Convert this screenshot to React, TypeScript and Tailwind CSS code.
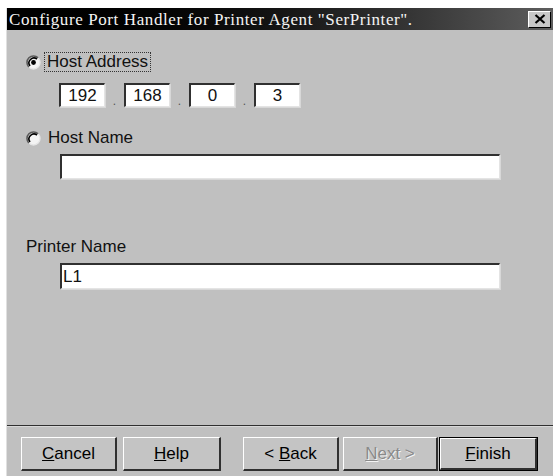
import React from "react";

const Radio = ({ checked }: { checked?: boolean }) => (
  <svg width="15" height="15" viewBox="0 0 15 15" className="shrink-0">
    <circle cx="7.5" cy="7.5" r="6.5" fill="#f4f4f4" />
    <path d="M12.1 2.9 A6.5 6.5 0 0 0 2.9 12.1" fill="none" stroke="#5a5a5a" strokeWidth="1.6" />
    <path d="M11 4 A5 5 0 0 0 4 11" fill="none" stroke="#000" strokeWidth="1.6" />
    <path d="M2.9 12.1 A6.5 6.5 0 0 0 12.1 2.9" fill="none" stroke="#e6e6e6" strokeWidth="1.4" />
    {checked && <circle cx="7.5" cy="7.5" r="2.4" fill="#000" />}
  </svg>
);

const Sunken = ({ className, children }: { className?: string; children?: React.ReactNode }) => (
  <div
    className={`bg-white border-t-2 border-l-2 border-b border-r border-t-[#303030] border-l-[#303030] border-b-[#e4e4e4] border-r-[#e4e4e4] shadow-[1px_1px_0_#d8d8d8] flex items-center ${className ?? ""}`}
  >
    {children}
  </div>
);

const Btn = ({
  children,
  className,
  disabled,
  isDefault,
}: {
  children: React.ReactNode;
  className?: string;
  disabled?: boolean;
  isDefault?: boolean;
}) => (
  <div className={`h-[34px] ${isDefault ? "border border-black" : ""} ${className ?? ""}`}>
    <div
      className={`h-full flex items-center justify-center border-t border-l border-t-white border-l-white border-b-2 border-r-2 border-b-[#303030] border-r-[#303030] bg-[#c4c4c4] ${
        disabled ? "text-[#8a8a8a] [text-shadow:1px_1px_0_#f4f4f4]" : "text-black"
      }`}
    >
      {children}
    </div>
  </div>
);

export default function App() {
  return (
    <div className="w-[557px] h-[476px] bg-white pt-[8px] pl-[6px] pr-[4px] overflow-hidden">
      <div
        className="h-full flex flex-col bg-[#c0c0c0] border-l border-l-[#e0e0e0] text-[17px] text-[#111]"
        style={{ fontFamily: '"Liberation Sans", Arial, sans-serif' }}
      >
        {/* title bar */}
        <div className="h-[22px] flex items-center justify-between bg-gradient-to-r from-black via-[#141414] to-[#5e5e5e] pl-[2px] pr-[2px]">
          <span
            className="text-[#f4f4f4] text-[17px] leading-none tracking-[0.6px]"
            style={{ fontFamily: '"Liberation Serif", "Times New Roman", serif' }}
          >
            Configure Port Handler for Printer Agent "SerPrinter".
          </span>
          <div className="w-[23px] h-[17px] bg-[#c8c8c8] border-t border-l border-t-white border-l-white border-b border-r border-b-black border-r-black flex items-center justify-center">
            <svg width="12" height="10" viewBox="0 0 12 10">
              <path d="M1.5 1 L10.5 9 M10.5 1 L1.5 9" stroke="#000" strokeWidth="2.2" />
            </svg>
          </div>
        </div>

        {/* body */}
        <div className="flex-1 flex flex-col pl-[19px]">
          <div className="mt-[22px] h-[20px] flex items-center gap-[3px]">
            <Radio checked />
            <span className="border border-dotted border-[#333] px-[2px] leading-[18px]">Host Address</span>
          </div>

          <div className="mt-[11px] ml-[33px] flex items-end">
            {["192", "168", "0", "3"].map((v, i) => (
              <React.Fragment key={i}>
                {i > 0 && <span className="w-[19px] text-center leading-none text-[#555] text-[12px]">.</span>}
                <Sunken className="w-[46px] h-[24px] justify-center">{v}</Sunken>
              </React.Fragment>
            ))}
          </div>

          <div className="mt-[21px] h-[20px] flex items-center gap-[7px]">
            <Radio />
            <span className="leading-[18px]">Host Name</span>
          </div>

          <Sunken className="mt-[6px] ml-[34px] w-[440px] h-[25px]" />

          <div className="mt-[58px] h-[20px] flex items-center">
            <span className="leading-[18px]">Printer Name</span>
          </div>

          <Sunken className="mt-[6px] ml-[34px] w-[440px] h-[26px] pl-[1px]">
            <span className="leading-none">L1</span>
          </Sunken>

          <div className="flex-1" />
        </div>

        {/* separator */}
        <div className="h-[2px] border-t border-t-[#303030] border-b border-b-[#d8d8d8]" />

        {/* buttons */}
        <div className="h-[49px] flex items-start pt-[10px] pl-[14px]">
          <Btn className="w-[96px]">
            <span>
              <span className="underline">C</span>ancel
            </span>
          </Btn>
          <Btn className="w-[98px] ml-[6px]">
            <span>
              <span className="underline">H</span>elp
            </span>
          </Btn>
          <Btn className="w-[96px] ml-[22px]">
            <span>
              &lt; <span className="underline">B</span>ack
            </span>
          </Btn>
          <Btn className="w-[95px] ml-[4px]" disabled>
            <span>
              <span className="underline">N</span>ext &gt;
            </span>
          </Btn>
          <Btn className="w-[99px] ml-[1px]" isDefault>
            <span>
              <span className="underline">F</span>inish
            </span>
          </Btn>
        </div>
      </div>
    </div>
  );
}
